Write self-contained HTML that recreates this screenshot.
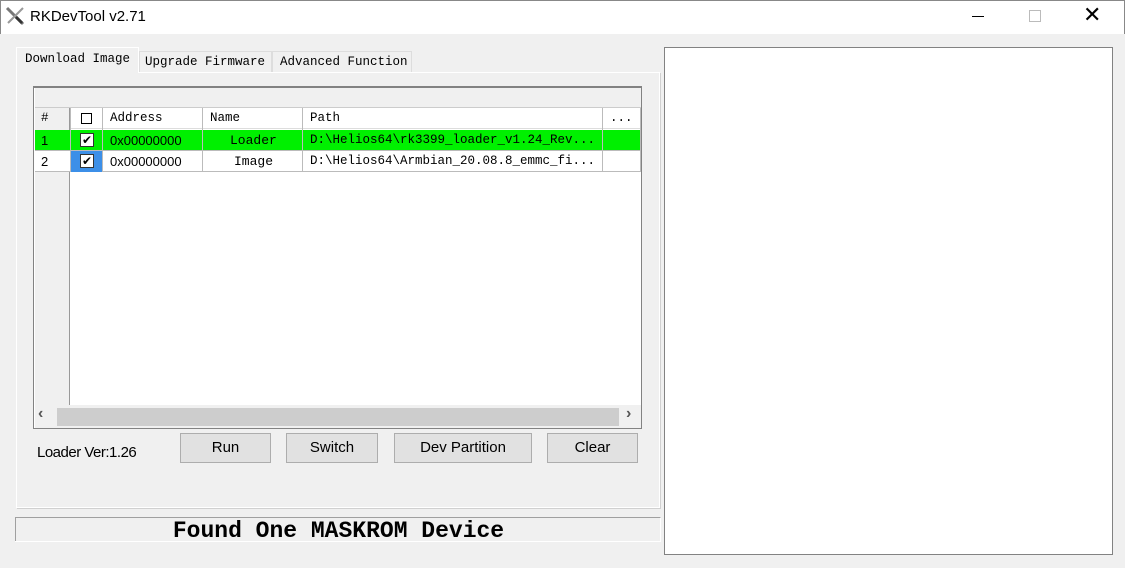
<!DOCTYPE html>
<html><head><style>
*{margin:0;padding:0;box-sizing:border-box}
body{width:1125px;height:568px;background:#f0f0f0;position:relative;overflow:hidden;font-family:"Liberation Sans",sans-serif}
.a{position:absolute}
.mono{font-family:"Liberation Mono","DejaVu Sans Mono",monospace;font-size:12.5px;color:#000}
.btn{position:absolute;background:#e1e1e1;border:1px solid #adadad;font-size:15px;text-align:center;line-height:28px;color:#000}
.cell{position:absolute;height:21px;line-height:21px;white-space:nowrap;overflow:hidden}
.cb{position:absolute;width:14px;height:14px;border:1px solid #333;background:#fff;font-size:12px;line-height:12px;text-align:center}
</style></head><body>
<div class="a" style="left:0;top:0;width:1125px;height:34px;background:#fff;border:1px solid #888;border-bottom:none"></div>
<svg class="a" style="left:5px;top:6px" width="20" height="20" viewBox="0 0 20 20"><path d="M2 2 L18 18" stroke="#777" stroke-width="3"/><path d="M18 2 L3 17" stroke="#999" stroke-width="2"/><path d="M11 11 L17 17" stroke="#333" stroke-width="3"/></svg>
<div class="a" style="left:30px;top:8px;font-size:15px;color:#000">RKDevTool v2.71</div>
<div class="a" style="left:972px;top:16px;width:12px;height:1px;background:#000"></div>
<div class="a" style="left:1029px;top:10px;width:12px;height:12px;border:1px solid #bbb"></div>
<div class="a" style="left:1083px;top:2px;font-size:22px;color:#000;font-weight:300">✕</div>

<div class="a" style="left:16px;top:72px;width:644px;height:436px;background:#f0f0f0;border:1px solid #fff;box-shadow:1px 1px 0 #d0d0d0"></div>
<div class="a mono" style="left:16px;top:47px;width:123px;height:26px;background:#f0f0f0;border:1px solid #fff;border-bottom:none;padding:4px 0 0 8px">Download Image</div>
<div class="a mono" style="left:139px;top:51px;width:133px;height:21px;border:1px solid #ddd;border-bottom:none;padding:3px 0 0 5px">Upgrade Firmware</div>
<div class="a mono" style="left:272px;top:51px;width:140px;height:21px;border:1px solid #ddd;border-bottom:none;padding:3px 0 0 7px">Advanced Function</div>

<div class="a" style="left:33px;top:86px;width:609px;height:343px;background:#fff;border:1px solid #828282;border-top:2px solid #828282"></div>
<div class="a" style="left:35px;top:88px;width:606px;height:20px;background:#f0f0f0;border-bottom:1px solid #ccc"></div>
<div class="a" style="left:35px;top:108px;width:606px;height:21px;background:#fff;border-bottom:1px solid #ddd"></div>
<div class="a" style="left:35px;top:108px;width:35px;height:297px;background:#f0f0f0;border-right:1px solid #999"></div>
<div class="a" style="left:35px;top:130px;width:606px;height:21px;background:#00f000"></div>
<div class="a" style="left:35px;top:151px;width:606px;height:21px;background:#fff;border-bottom:1px solid #bbb"></div>
<div class="a" style="left:70px;top:151px;width:32px;height:21px;background:#3c8fe8"></div>
<div class="a" style="left:35px;top:130px;width:35px;height:42px;border-bottom:1px solid #bbb"></div>
<div class="a" style="left:35px;top:150px;width:606px;height:1px;background:#bbb"></div>
<div class="a" style="left:70px;top:108px;width:1px;height:64px;background:#bbb"></div>
<div class="a" style="left:102px;top:108px;width:1px;height:64px;background:#bbb"></div>
<div class="a" style="left:202px;top:108px;width:1px;height:64px;background:#bbb"></div>
<div class="a" style="left:302px;top:108px;width:1px;height:64px;background:#bbb"></div>
<div class="a" style="left:602px;top:108px;width:1px;height:64px;background:#bbb"></div>
<div class="a" style="left:640px;top:108px;width:1px;height:64px;background:#bbb"></div>

<div class="cell mono" style="left:41px;top:108px">#</div>
<div class="a" style="left:81px;top:113px;width:11px;height:11px;border:1px solid #000"></div>
<div class="cell mono" style="left:110px;top:108px">Address</div>
<div class="cell mono" style="left:210px;top:108px">Name</div>
<div class="cell mono" style="left:310px;top:108px">Path</div>
<div class="cell mono" style="left:610px;top:108px">...</div>

<div class="cell" style="left:41px;top:130px;font-size:13px">1</div>
<div class="cb" style="left:80px;top:133px">✔</div>
<div class="cell" style="left:110px;top:130px;font-size:13px">0x00000000</div>
<div class="cell mono" style="left:230px;top:130px;font-size:13px">Loader</div>
<div class="cell mono" style="left:310px;top:130px;width:290px">D:\Helios64\rk3399_loader_v1.24_Rev...</div>
<div class="cell" style="left:41px;top:151px;font-size:13px">2</div>
<div class="cb" style="left:80px;top:154px">✔</div>
<div class="cell" style="left:110px;top:151px;font-size:13px">0x00000000</div>
<div class="cell mono" style="left:234px;top:151px;font-size:13px">Image</div>
<div class="cell mono" style="left:310px;top:151px;width:290px">D:\Helios64\Armbian_20.08.8_emmc_fi...</div>

<div class="a" style="left:35px;top:405px;width:606px;height:23px;background:#f0f0f0"></div>
<div class="a" style="left:57px;top:408px;width:562px;height:18px;background:#cdcdcd"></div>
<div class="a" style="left:38px;top:405px;font-size:16px;font-weight:bold;color:#555">‹</div>
<div class="a" style="left:626px;top:405px;font-size:16px;font-weight:bold;color:#555">›</div>

<div class="a" style="left:37px;top:444px;font-size:15px;letter-spacing:-0.5px">Loader Ver:1.26</div>
<div class="btn" style="left:180px;top:433px;width:91px;height:30px">Run</div>
<div class="btn" style="left:286px;top:433px;width:92px;height:30px">Switch</div>
<div class="btn" style="left:394px;top:433px;width:138px;height:30px">Dev Partition</div>
<div class="btn" style="left:547px;top:433px;width:91px;height:30px">Clear</div>

<div class="a" style="left:15px;top:517px;width:646px;height:25px;border:1px solid #a0a0a0;border-right:1px solid #fff;border-bottom:none;background:#f0f0f0"></div>
<div class="a" style="left:15px;top:541px;width:646px;height:1px;background:#fff"></div>
<div class="a" style="left:0;top:517px;width:677px;text-align:center;font-family:'Liberation Mono',monospace;font-weight:bold;font-size:23px;line-height:29px;color:#000">Found One MASKROM Device</div>

<div class="a" style="left:664px;top:47px;width:449px;height:508px;background:#fff;border:1px solid #828282"></div>
</body></html>
